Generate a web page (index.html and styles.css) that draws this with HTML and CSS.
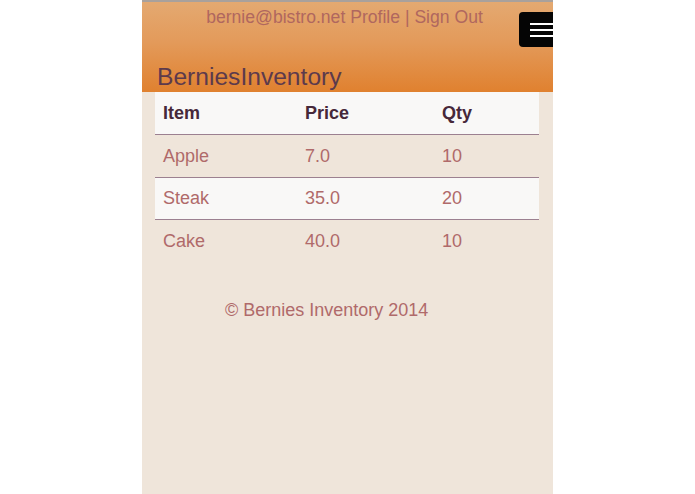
FILE: index.html
```html
<!DOCTYPE html>
<html>
<head>
<meta charset="utf-8">
<link rel="stylesheet" href="styles.css">
</head>
<body>
<div class="page">
  <header class="header">
    <div class="userbar">bernie@bistro.net Profile | Sign Out</div>
    <button class="menu-btn" aria-label="Menu">
      <span class="bar"></span><span class="bar"></span><span class="bar"></span>
    </button>
    <h1 class="brand">BerniesInventory</h1>
  </header>
  <table class="inv">
    <thead>
      <tr><th class="c1">Item</th><th class="c2">Price</th><th class="c3">Qty</th></tr>
    </thead>
    <tbody>
      <tr><td>Apple</td><td>7.0</td><td>10</td></tr>
      <tr class="alt"><td>Steak</td><td>35.0</td><td>20</td></tr>
      <tr><td>Cake</td><td>40.0</td><td>10</td></tr>
    </tbody>
  </table>
  <footer class="footer">© Bernies Inventory 2014</footer>
</div>
</body>
</html>
```
FILE: styles.css
```css
html, body {
  margin: 0;
  padding: 0;
  background: #ffffff;
}
body {
  font-family: "Liberation Sans", Arial, sans-serif;
}
.page {
  width: 411px;
  height: 494px;
  margin: 0 auto;
  background: #efe5da;
  overflow: hidden;
  position: relative;
}
.header {
  position: relative;
  height: 90px;
  border-top: 2px solid #a9a19c;
  background: linear-gradient(to bottom, #e4a971 0%, #e39a5a 45%, #e0812f 100%);
  display: flex;
  flex-direction: column;
}
.userbar {
  text-align: center;
  padding: 5px 6px 0 0;
  font-size: 17.6px;
  line-height: 20px;
  color: #b0675f;
}
.menu-btn {
  position: absolute;
  top: 10px;
  left: 377px;
  width: 46px;
  height: 35px;
  background: #050505;
  border: none;
  border-radius: 4px;
  padding: 0 0 0 11px;
  display: flex;
  flex-direction: column;
  justify-content: center;
  gap: 4px;
}
.menu-btn .bar {
  display: block;
  width: 26px;
  height: 2px;
  background: #ffffff;
}
.brand {
  margin: auto 0 0 0;
  padding: 0 0 0 15px;
  font-size: 24.6px;
  font-weight: normal;
  line-height: 30px;
  color: #5c3a4c;
  height: 30px;
}
.inv {
  width: 384px;
  margin: 0 14px 0 13px;
  border-collapse: collapse;
  font-size: 18px;
}
.inv th, .inv td {
  height: 42px;
  padding: 0 8px;
  text-align: left;
  vertical-align: middle;
}
.inv th {
  background: #f9f8f7;
  color: #46283a;
  font-weight: bold;
  border-bottom: 1px solid #9c8090;
}
.inv td {
  color: #b06a6a;
}
.inv .c1 { width: 126px; }
.inv .c2 { width: 121px; }
.inv tr.alt td {
  height: 41px;
  background: #f9f8f7;
  border-top: 1px solid #9c8090;
  border-bottom: 1px solid #9c8090;
}
.footer {
  padding: 38px 0 0 83px;
  font-size: 18px;
  line-height: 20px;
  color: #b06a6a;
}
```
